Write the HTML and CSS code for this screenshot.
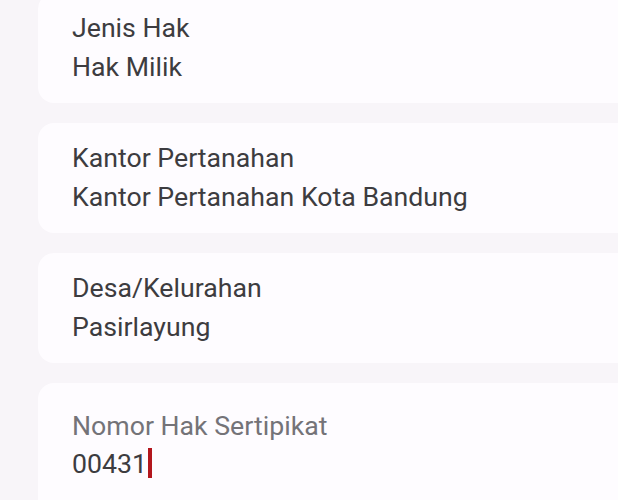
FILE: index.html
```html
<!DOCTYPE html>
<html lang="id">
<head>
<meta charset="utf-8">
<link rel="stylesheet" href="styles.css">
</head>
<body>
<div class="list">
  <div class="card">
    <div class="label">Jenis Hak</div>
    <div class="value">Hak Milik</div>
  </div>
  <div class="card">
    <div class="label">Kantor Pertanahan</div>
    <div class="value">Kantor Pertanahan Kota Bandung</div>
  </div>
  <div class="card">
    <div class="label">Desa/Kelurahan</div>
    <div class="value">Pasirlayung</div>
  </div>
  <div class="card input">
    <div class="label muted">Nomor Hak Sertipikat</div>
    <div class="value">00431<span class="caret"></span></div>
  </div>
</div>
</body>
</html>
```
FILE: styles.css
```css
html, body {
  margin: 0;
  padding: 0;
  background: #f8f5f9;
  overflow: hidden;
  height: 500px;
}
body {
  font-family: Roboto, "Noto Sans", sans-serif;
  color: #3d3c40;
}
.list {
  display: flex;
  flex-direction: column;
  gap: 20px;
  margin-top: -7px;
  padding-left: 38px;
}
.card {
  background: #fefcff;
  border-radius: 16px 0 0 16px;
  padding: 16px 20px 16px 34px;
  font-size: 26.7px;
  line-height: 39px;
}
.card.input {
  padding-top: 25px;
  padding-bottom: 0;
  height: 92px;
  border-radius: 16px 0 0 0;
}
.card.input .label {
  line-height: 37px;
}
.muted {
  color: #747378;
}
.caret {
  display: inline-block;
  width: 4px;
  height: 30px;
  background: #b3161d;
  vertical-align: -5px;
  margin-left: 1px;
}
```
